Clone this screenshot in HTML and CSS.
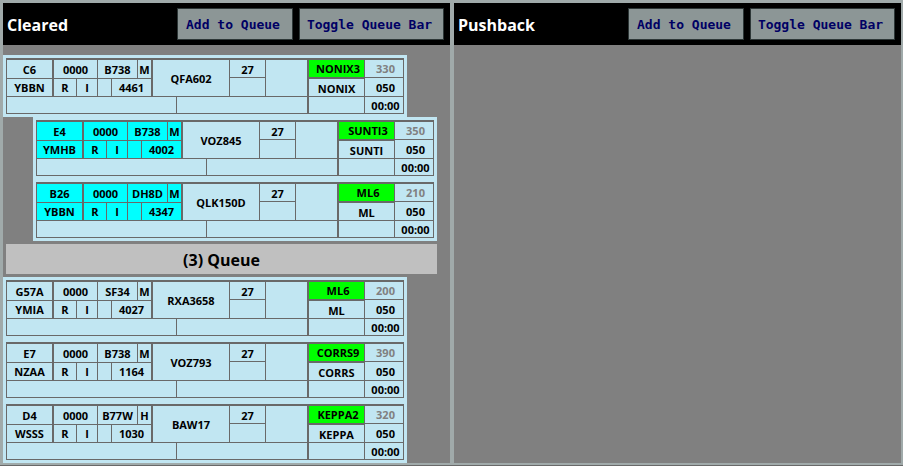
FILE: index.html
```
<!DOCTYPE html>
<html lang="en">
<head>
<meta charset="utf-8">
<title>Strip board</title>
<link rel="stylesheet" href="styles.css">
</head>
<body>
<main class="board">
  <section class="bay">
    <header class="bay-header">
      <h2 class="bay-title">Cleared</h2>
      <button type="button" class="bay-button add">Add to Queue</button>
      <button type="button" class="bay-button toggle">Toggle Queue Bar</button>
    </header>
    <div class="bay-body" id="cleared"></div>
  </section>
  <section class="bay">
    <header class="bay-header">
      <h2 class="bay-title">Pushback</h2>
      <button type="button" class="bay-button add">Add to Queue</button>
      <button type="button" class="bay-button toggle">Toggle Queue Bar</button>
    </header>
    <div class="bay-body"></div>
  </section>
</main>
<script src="strips.js"></script>
</body>
</html>
```
FILE: styles.css
```
* {
  box-sizing: border-box;
}

body {
  margin: 0;
  background: #a0aaaa;
  font-family: "Open Sans", "Noto Sans", sans-serif;
  color: #000;
}

.board {
  display: flex;
  gap: 4px;
  min-height: 100vh;
  padding: 3px 2px 2px 3px;
  border-bottom: 1px solid #696969;
}

.bay {
  flex: 1;
  min-width: 0;
  background: #808080;
}

.bay-header {
  display: flex;
  align-items: center;
  gap: 6px;
  height: 42px;
  padding: 0 6px 0 4px;
  background: #000;
}

.bay-title {
  flex: 1;
  margin: 0;
  padding-top: 2px;
  font-size: 16px;
  line-height: 22px;
  font-weight: 700;
  color: #fff;
}

.bay-button {
  height: 32px;
  padding: 2px 4px 0 0;
  border: 1px solid #2d3737;
  background: #8c9696;
  color: #000064;
  font-family: "DejaVu Sans Mono", monospace;
  font-size: 13px;
  line-height: 16px;
  font-weight: 700;
  white-space: nowrap;
}

.add {
  width: 116px;
}

.toggle {
  width: 145px;
}

.bay-body {
  padding-top: 10px;
}

.strip {
  width: 404px;
  padding: 3px;
  background: #c1e6f2;
}

.strip.offset {
  margin-left: 30px;
}

.queue-bar {
  margin: 3px 13px 3px 3px;
  padding: 5px 0 3px;
  background: #c0c0c0;
  font-size: 16px;
  line-height: 22px;
  font-weight: 700;
  text-align: center;
}

.grid {
  display: grid;
  grid-template-columns: 47px 23px 21px 14px 26px 15px 24px 53px 36px 43px 56px 39px;
  grid-template-rows: 18px 1px 18px 17px;
  border: solid #696969;
  border-width: 2px 0 0 1px;
  font-size: 11px;
  line-height: 16px;
  font-weight: 700;
}

.cell {
  display: flex;
  align-items: center;
  justify-content: center;
  min-width: 0;
  border: solid #696969;
  border-width: 0 1px 1px 0;
  white-space: nowrap;
}

.stand    { grid-area: 1 / 1 / 3 / 2; border-right-width: 2px; }
.dest     { grid-area: 3 / 1 / 4 / 2; border-right-width: 2px; }
.time     { grid-area: 1 / 2 / 3 / 4; }
.type     { grid-area: 1 / 4 / 3 / 6; }
.wake     { grid-area: 1 / 6 / 3 / 7; border-right-width: 2px; }
.route    { grid-area: 3 / 2 / 4 / 3; }
.rules    { grid-area: 3 / 3 / 4 / 4; }
.flag     { grid-area: 3 / 4 / 4 / 5; }
.squawk   { grid-area: 3 / 5 / 4 / 7; border-right-width: 2px; }
.callsign { grid-area: 1 / 7 / 4 / 9; }
.runway   { grid-area: 1 / 9 / 2 / 10; }
.hold     { grid-area: 2 / 9 / 4 / 10; }
.gate     { grid-area: 1 / 10 / 4 / 11; border-right-width: 2px; }
.sid      { grid-area: 1 / 11 / 3 / 12; border-bottom-width: 2px; background: #0f0; }
.fix      { grid-area: 3 / 11 / 4 / 12; }
.level    { grid-area: 1 / 12 / 2 / 13; color: #808080; }
.cleared  { grid-area: 2 / 12 / 4 / 13; }
.remark   { grid-area: 4 / 1 / 5 / 8; }
.notes    { grid-area: 4 / 8 / 5 / 11; border-right-width: 2px; }
.spare    { grid-area: 4 / 11 / 5 / 12; }
.clock    { grid-area: 4 / 12 / 5 / 13; }

.stand,
.time,
.type,
.wake,
.callsign,
.runway,
.fix,
.cleared,
.clock {
  padding-top: 2px;
}

.sid,
.level,
.cleared,
.clock {
  padding-left: 3px;
}

.offset .stand,
.offset .dest,
.offset .time,
.offset .type,
.offset .wake,
.offset .route,
.offset .rules,
.offset .flag,
.offset .squawk {
  background: #0ff;
}
```
FILE: strips.js
```
const blank = { hold: "", gate: "", flag: "", remark: "", notes: "", spare: "" };
const shared = { time: "0000", route: "R", rules: "I", runway: "27", cleared: "050", clock: "00:00" };
const order = ["stand", "time", "type", "wake", "dest", "route", "rules", "flag", "squawk", "callsign",
  "runway", "hold", "gate", "sid", "level", "fix", "cleared", "remark", "notes", "spare", "clock"];

const ahead = [
  { stand: "C6", dest: "YBBN", type: "B738", wake: "M", squawk: "4461", callsign: "QFA602", sid: "NONIX3", fix: "NONIX", level: "330" },
  { stand: "E4", dest: "YMHB", type: "B738", wake: "M", squawk: "4002", callsign: "VOZ845", sid: "SUNTI3", fix: "SUNTI", level: "350", offset: true },
  { stand: "B26", dest: "YBBN", type: "DH8D", wake: "M", squawk: "4347", callsign: "QLK150D", sid: "ML6", fix: "ML", level: "210", offset: true }
];
const queued = [
  { stand: "G57A", dest: "YMIA", type: "SF34", wake: "M", squawk: "4027", callsign: "RXA3658", sid: "ML6", fix: "ML", level: "200" },
  { stand: "E7", dest: "NZAA", type: "B738", wake: "M", squawk: "1164", callsign: "VOZ793", sid: "CORRS9", fix: "CORRS", level: "390" },
  { stand: "D4", dest: "WSSS", type: "B77W", wake: "H", squawk: "1030", callsign: "BAW17", sid: "KEPPA2", fix: "KEPPA", level: "320" }
];

function add(parent, className, text) {
  const el = document.createElement("div");
  el.className = className;
  if (text) el.textContent = text;
  parent.append(el);
  return el;
}

function addStrip(bay, flight) {
  const data = { ...blank, ...shared, ...flight };
  const strip = add(bay, flight.offset ? "strip offset" : "strip");
  const grid = add(strip, "grid");
  for (const name of order) add(grid, "cell " + name, data[name]);
}

const bay = document.getElementById("cleared");
ahead.forEach(f => addStrip(bay, f));
add(bay, "queue-bar", `(${queued.length}) Queue`);
queued.forEach(f => addStrip(bay, f));
```
